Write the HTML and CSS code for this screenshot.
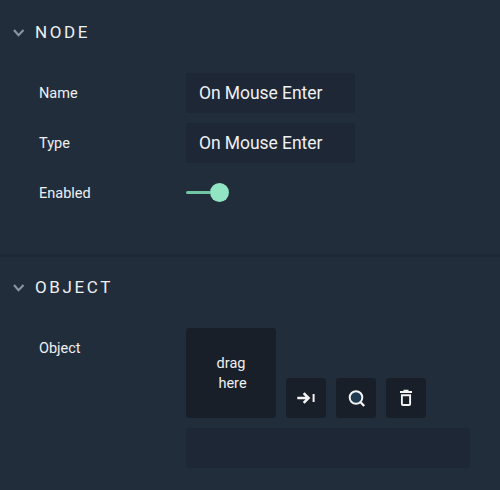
FILE: index.html
```html
<!DOCTYPE html>
<html lang="en">
<head>
<meta charset="utf-8">
<title>Node properties</title>
<link rel="stylesheet" href="styles.css">
</head>
<body>
<section class="panel">
  <h2 class="heading"><svg class="chevron" viewBox="0 0 12 8"><path d="M1 1 5.5 6.3 10.5 1"/></svg><span>NODE</span></h2>
  <div class="row"><span class="label">Name</span><div class="field">On Mouse Enter</div></div>
  <div class="row"><span class="label">Type</span><div class="field">On Mouse Enter</div></div>
  <div class="row"><span class="label">Enabled</span><div class="toggle"><span class="track"></span><span class="knob"></span></div></div>
</section>
<section class="panel panel-object">
  <h2 class="heading"><svg class="chevron" viewBox="0 0 12 8"><path d="M1 1 5.5 6.3 10.5 1"/></svg><span>OBJECT</span></h2>
  <div class="object-row">
    <span class="label">Object</span>
    <div class="picker">
      <div class="drop"><span>drag</span><span class="second">here</span></div>
      <button class="tool" aria-label="Go to object"><svg viewBox="0 0 40 40"><path class="arrow" d="M11.3 20H22M17.7 15.2 22.5 20 17.7 24.8"/><path class="bar" d="M27.6 16V24"/></svg></button>
      <button class="tool" aria-label="Find object"><svg viewBox="0 0 40 40"><circle class="lens" cx="20" cy="19.5" r="6.3"/><path class="handle" d="M24.6 24.2 28.2 28"/></svg></button>
      <button class="tool" aria-label="Delete"><svg viewBox="0 0 40 40"><path class="lid" d="M14 14H26M17.5 12.8H22.5"/><path class="can" d="M15.9 17.2H24.1V26Q24.1 27 23.1 27H16.9Q15.9 27 15.9 26Z"/></svg></button>
    </div>
  </div>
  <div class="value"></div>
</section>
</body>
</html>
```
FILE: styles.css
```css
* { box-sizing: border-box; }
body {
  margin: 0;
  height: 490px;
  overflow: hidden;
  background: #222d3c;
  color: #eef0f2;
  font-family: Roboto, "Liberation Sans", sans-serif;
}
.panel { height: 254px; padding-top: 17px; }
.panel-object {
  height: 236px;
  padding-top: 15px;
  border-top: 3px solid #1d2735;
}
.heading {
  display: flex;
  align-items: center;
  height: 30px;
  margin: 0 0 26px;
  padding-left: 13px;
  font-size: 17px;
  font-weight: 400;
  letter-spacing: 2.6px;
}
.chevron {
  width: 12px;
  height: 8px;
  margin: 2px 10px 0 0;
  fill: none;
  stroke: #8b95a1;
  stroke-width: 2.1;
}
.row {
  display: flex;
  align-items: center;
  height: 40px;
  margin-bottom: 10px;
  padding-left: 39px;
}
.label { width: 147px; font-size: 14.5px; }
.field {
  width: 169px;
  height: 40px;
  padding-left: 13px;
  border-radius: 2px;
  background: #1e2735;
  font-size: 17.5px;
  letter-spacing: -0.06px;
  line-height: 40px;
}
.toggle { display: flex; align-items: center; padding-bottom: 1px; }
.track {
  width: 24px;
  height: 3px;
  border-radius: 2px 0 0 2px;
  background: #71c5a5;
}
.knob {
  width: 19px;
  height: 19px;
  border-radius: 50%;
  background: #92e5c3;
}
.object-row { display: flex; padding-left: 39px; }
.object-row .label { padding-top: 12px; line-height: 17px; }
.picker { display: flex; align-items: flex-end; gap: 10px; }
.drop {
  display: flex;
  flex-direction: column;
  align-items: center;
  justify-content: center;
  width: 90px;
  height: 90px;
  padding-top: 2px;
  border-radius: 3px;
  background: #191f28;
  font-size: 14.5px;
  line-height: 20px;
}
.second { padding-left: 3px; }
.tool {
  width: 40px;
  height: 40px;
  padding: 0;
  border: 0;
  border-radius: 3px;
  background: #191f28;
}
.tool svg {
  display: block;
  width: 40px;
  height: 40px;
  fill: none;
  stroke: #f4f4f4;
  stroke-width: 2;
}
.tool .arrow { stroke-width: 2.6; }
.tool .lens { fill: #203a50; }
.tool .handle { stroke-width: 2.3; }
.tool .can { stroke-width: 1.9; }
.value {
  width: 284px;
  height: 40px;
  margin: 10px 0 0 186px;
  border-radius: 2px;
  background: #1e2735;
}
```
